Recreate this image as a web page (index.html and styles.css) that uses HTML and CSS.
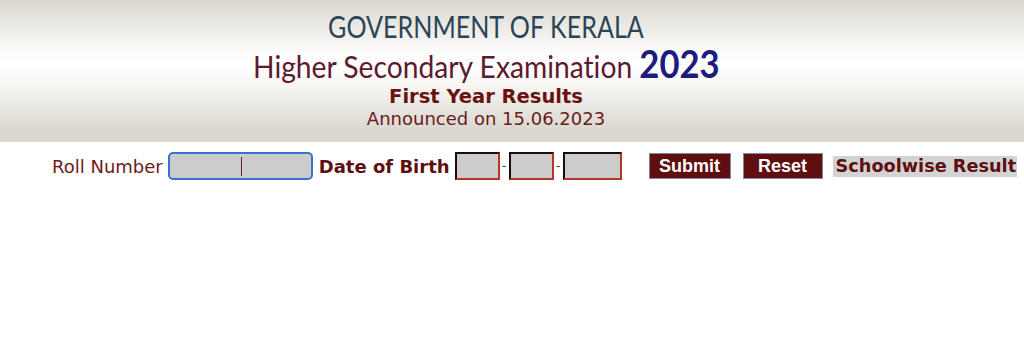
FILE: index.html
```html
<!DOCTYPE html>
<html>
<head>
<meta charset="utf-8">
<link rel="stylesheet" href="styles.css">
</head>
<body>
<header class="banner">
  <div class="gov"><span class="squeeze-gov">GOVERNMENT OF KERALA</span></div>
  <div class="exam"><span class="squeeze-exam">Higher Secondary Examination <span class="year">2023</span></span></div>
  <div class="result">First Year Results</div>
  <div class="announced">Announced on 15.06.2023</div>
</header>
<form class="search">
  <label class="lbl" for="roll">Roll Number</label>
  <span class="roll" id="roll"><span class="caret"></span></span>
  <span class="lbl-bold">Date of Birth</span>
  <span class="dob dd"></span><span class="sep">-</span><span class="dob mm"></span><span class="sep">-</span><span class="dob yy"></span>
  <button type="button" class="btn submit">Submit</button>
  <button type="button" class="btn reset">Reset</button>
  <a class="school">Schoolwise Result</a>
</form>
</body>
</html>
```
FILE: styles.css
```css
html, body {
  margin: 0;
  padding: 0;
  background: #ffffff;
}
.banner {
  height: 142px;
  box-sizing: border-box;
  padding-top: 8px;
  padding-right: 52px;
  text-align: center;
  background: linear-gradient(to bottom, #dad7d0 0%, #ebe9e4 18%, #fbfbfa 36%, #ffffff 46%, #f7f6f3 60%, #e6e4de 78%, #dad7cf 92%, #dcd9d2 100%);
}
.gov {
  font-family: Lato, "Open Sans", sans-serif;
  font-size: 31px;
  line-height: 36px;
  color: #2b4557;
}
.squeeze-gov {
  display: inline-block;
  transform: scaleX(0.81);
}
.exam {
  font-family: Lato, "Open Sans", sans-serif;
  font-size: 31px;
  line-height: 40px;
  padding-top: 2px;
  color: #5c1a30;
  font-variant-ligatures: none;
}
.squeeze-exam {
  display: inline-block;
  transform: scaleX(0.91);
}
.year {
  font-weight: bold;
  font-size: 38px;
  line-height: 30px;
  color: #1c1b7e;
}
.result {
  font-family: "DejaVu Sans", Verdana, sans-serif;
  font-weight: bold;
  font-size: 19.5px;
  line-height: 22px;
  color: #6a1210;
}
.announced {
  font-family: "DejaVu Sans", Verdana, sans-serif;
  font-size: 18px;
  line-height: 22px;
  color: #6b1b1b;
}
.search {
  display: flex;
  align-items: center;
  height: 28px;
  margin-top: 10px;
  padding-left: 52px;
  font-family: "DejaVu Sans", Verdana, sans-serif;
  color: #6b1b1b;
}
.lbl {
  font-size: 18px;
  color: #6b1b1b;
  margin-right: 5px;
}
.roll {
  width: 145px;
  height: 28px;
  box-sizing: border-box;
  border: 2px solid #3a70d2;
  border-radius: 5px;
  background: #cccccc;
  position: relative;
}
.caret {
  position: absolute;
  left: 71px;
  top: 3px;
  width: 1px;
  height: 19px;
  background: #6b1b1b;
}
.lbl-bold {
  font-size: 18px;
  font-weight: bold;
  color: #5e0f0f;
  margin-left: 6px;
  margin-right: 5px;
}
.dob {
  height: 28px;
  box-sizing: border-box;
  border-style: solid;
  border-width: 2px;
  border-color: #1a0c0c #b5342b #b5342b #1a0c0c;
  background: #cccccc;
}
.dd, .mm { width: 45px; }
.yy { width: 59px; }
.sep {
  font-size: 12px;
  color: #6b1b1b;
  width: 9px;
  text-align: center;
}
.btn {
  font-family: "Liberation Sans", Arial, sans-serif;
  font-weight: bold;
  font-size: 18px;
  color: #ffffff;
  background: #5f0f0f;
  border: 1px solid #7d8aa2;
  height: 26px;
  padding: 0;
  margin: 0;
}
.submit {
  width: 82px;
  margin-left: 27px;
}
.reset {
  width: 80px;
  margin-left: 12px;
}
.school {
  margin-left: 10px;
  background: #d3d3d3;
  font-size: 17.7px;
  font-weight: bold;
  color: #5e0f0f;
  padding: 0 1px 0 3px;
  line-height: 21px;
}
```
